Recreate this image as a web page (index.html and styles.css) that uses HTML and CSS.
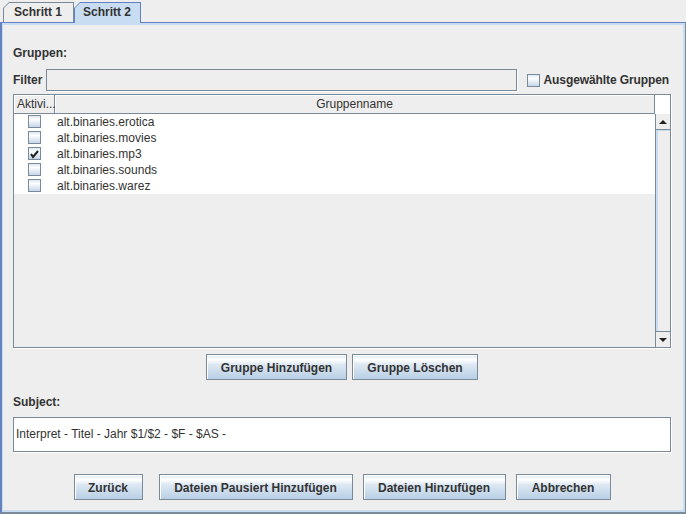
FILE: index.html
```html
<!DOCTYPE html>
<html lang="de">
<head>
    <meta charset="UTF-8">
    <title>Gruppen</title>
    <link rel="stylesheet" href="styles.css">
</head>
<body>
<div class="window">
    <div class="tabs">
        <div class="tab tab-first"><div class="tab-face">Schritt 1</div></div>
        <div class="tab tab-selected"><div class="tab-face">Schritt 2</div></div>
    </div>
    <div class="panel">
        <div class="panel-inner">
            <div class="label section-label">Gruppen:</div>

            <div class="filter-row">
                <span class="label">Filter</span>
                <div class="field field-filter"></div>
                <div class="check-label"><span class="checkbox"></span>Ausgewählte Gruppen</div>
            </div>

            <div class="table">
                <div class="table-main">
                    <div class="table-header">
                        <div class="th th-active">Aktivi...</div>
                        <div class="th th-name">Gruppenname</div>
                    </div>
                    <div class="table-body">
                        <div class="row">
                            <div class="cell-active"><span class="checkbox"></span></div>
                            <div class="cell-name">alt.binaries.erotica</div>
                        </div>
                        <div class="row">
                            <div class="cell-active"><span class="checkbox"></span></div>
                            <div class="cell-name">alt.binaries.movies</div>
                        </div>
                        <div class="row">
                            <div class="cell-active">
                                <span class="checkbox">
                                    <svg width="11" height="11" viewBox="0 0 11 11"><path d="M2 6 L4 9 L9 3" fill="none" stroke="#222" stroke-width="2"/></svg>
                                </span>
                            </div>
                            <div class="cell-name">alt.binaries.mp3</div>
                        </div>
                        <div class="row">
                            <div class="cell-active"><span class="checkbox"></span></div>
                            <div class="cell-name">alt.binaries.sounds</div>
                        </div>
                        <div class="row">
                            <div class="cell-active"><span class="checkbox"></span></div>
                            <div class="cell-name">alt.binaries.warez</div>
                        </div>
                    </div>
                </div>
                <div class="scrollbar">
                    <div class="sb-corner"></div>
                    <div class="sb-button sb-up">
                        <svg width="8" height="4" viewBox="0 0 8 4"><polygon points="0,4 8,4 4,0" fill="#222"/></svg>
                    </div>
                    <div class="sb-track"></div>
                    <div class="sb-button sb-down">
                        <svg width="8" height="4" viewBox="0 0 8 4"><polygon points="0,0 8,0 4,4" fill="#222"/></svg>
                    </div>
                </div>
            </div>

            <div class="button-row button-row-table">
                <button class="btn btn-add">Gruppe Hinzufügen</button>
                <button class="btn btn-delete">Gruppe Löschen</button>
            </div>

            <div class="label subject-label">Subject:</div>
            <div class="field field-subject">Interpret - Titel - Jahr $1/$2 - $F - $AS -</div>

            <div class="button-row button-row-bottom">
                <button class="btn btn-back">Zurück</button>
                <button class="btn btn-paused">Dateien Pausiert Hinzufügen</button>
                <button class="btn btn-files">Dateien Hinzufügen</button>
                <button class="btn btn-cancel">Abbrechen</button>
            </div>
        </div>
    </div>
</div>
</body>
</html>
```

FILE: styles.css
```css
* {
    box-sizing: border-box;
}
body {
    margin: 0;
    font-family: "Liberation Sans", Arial, sans-serif;
    font-size: 12px;
    color: #333333;
    background: #eeeeee;
}
.window {
    width: 686px;
    height: 514px;
    display: flex;
    flex-direction: column;
}

/* tabs */
.tabs {
    height: 22px;
    display: flex;
    align-items: flex-end;
    padding-left: 3px;
}
.tab {
    height: 20px;
    padding: 1px 1px 0 1px;
    background: #7a8a99;
    clip-path: polygon(6px 0, 100% 0, 100% 100%, 0 100%, 0 6px);
}
.tab-face {
    height: 100%;
    background: #eeeeee;
    font-weight: bold;
    line-height: 19px;
    white-space: nowrap;
    clip-path: polygon(5px 0, 100% 0, 100% 100%, 0 100%, 0 5px);
}
.tab-first {
    width: 71px;
}
.tab-first .tab-face {
    padding-left: 10px;
}
.tab-selected {
    position: relative;
    z-index: 1;
    width: 67px;
    height: 21px;
    margin-bottom: -1px;
    background: #6382bf;
}
.tab-selected .tab-face {
    padding-left: 8px;
    background: #c8ddf2;
    line-height: 18px;
}

/* content panel */
.panel {
    flex: 1;
    border-top: 1px solid #6382bf;
    border-left: 2px solid #6382bf;
    border-right: 1px solid #7a8a99;
    border-bottom: 2px solid #7a8a99;
}
.panel-inner {
    height: 100%;
    border: 2px solid #c8ddf2;
    border-left-width: 1px;
    padding: 0 12px 0 10px;
}
.label {
    font-weight: bold;
    line-height: 15px;
}
.section-label {
    margin-top: 21px;
}

.filter-row {
    display: flex;
    align-items: center;
    height: 22px;
    margin-top: 8px;
}
.field {
    border: 1px solid #7a8a99;
    box-shadow: 1px 1px 0 #ffffff;
}
.field-filter {
    flex: 1;
    height: 22px;
    margin-left: 4px;
    background: #eeeeee;
}
.check-label {
    display: flex;
    align-items: center;
    margin-left: 10px;
    margin-right: 2px;
    font-weight: bold;
    letter-spacing: -0.1px;
}
.checkbox {
    display: inline-block;
    width: 13px;
    height: 13px;
    border: 1px solid #7a8a99;
    background: linear-gradient(#dde8f3, #ffffff 30%, #c4d6ea);
}
.checkbox svg {
    display: block;
}
.check-label .checkbox {
    margin-right: 4px;
}

/* table */
.table {
    display: flex;
    height: 254px;
    margin-top: 3px;
    border: 1px solid #7a8a99;
    box-shadow: 1px 1px 0 #ffffff;
}
.table-main {
    width: 641px;
    display: flex;
    flex-direction: column;
}
.table-header {
    display: flex;
    height: 19px;
    border-bottom: 1px solid #7a8a99;
    background: #eeeeee;
}
.th {
    border-right: 1px solid #7a8a99;
    box-shadow: inset 1px 1px 0 #ffffff;
    line-height: 19px;
    white-space: nowrap;
}
.th-active {
    width: 41px;
    padding-left: 3px;
}
.th-name {
    flex: 1;
    text-align: center;
}
.table-body {
    flex: 1;
    background: #eeeeee;
}
.row {
    display: flex;
    height: 16px;
    background: #ffffff;
}
.cell-active {
    width: 41px;
    padding: 1px 0 0 14px;
}
.cell-name {
    padding: 1px 0 0 2px;
    line-height: 15px;
}

.scrollbar {
    width: 15px;
    display: flex;
    flex-direction: column;
}
.sb-corner {
    height: 19px;
    background: #ffffff;
}
.sb-button {
    height: 16px;
    display: flex;
    align-items: center;
    justify-content: center;
    border-left: 1px solid #7a8a99;
    background: #eeeeee;
}
.sb-up {
    border-bottom: 1px solid #7a8a99;
}
.sb-down {
    border-top: 1px solid #7a8a99;
}
.sb-track {
    flex: 1;
    border-left: 1px solid #7a8a99;
    background: #eeeeee;
    box-shadow: inset 2px 1px 0 #c8ddf2;
}

/* buttons */
.button-row {
    display: flex;
    justify-content: center;
    gap: 5px;
}
.button-row-table {
    margin-top: 6px;
}
.button-row-bottom {
    margin-top: 22px;
    gap: 10px;
}
.btn {
    height: 26px;
    padding: 1px 0 0 0;
    border: 1px solid #7a8a99;
    box-shadow: inset 1px 1px 0 #ffffff;
    background: linear-gradient(#dde8f3, #ffffff 20%, #dde8f3 40%, #b8cfe5);
    font-family: "Liberation Sans", Arial, sans-serif;
    font-size: 12px;
    font-weight: bold;
    color: #333333;
}
.btn-add {
    width: 141px;
}
.btn-delete {
    width: 126px;
}
.btn-back {
    width: 69px;
    margin-right: 6px;
}
.btn-paused {
    width: 194px;
}
.btn-files {
    width: 143px;
}
.btn-cancel {
    width: 95px;
}

.subject-label {
    margin-top: 15px;
}
.field-subject {
    height: 35px;
    margin-top: 7px;
    padding-left: 2px;
    background: #ffffff;
    line-height: 33px;
}
```
